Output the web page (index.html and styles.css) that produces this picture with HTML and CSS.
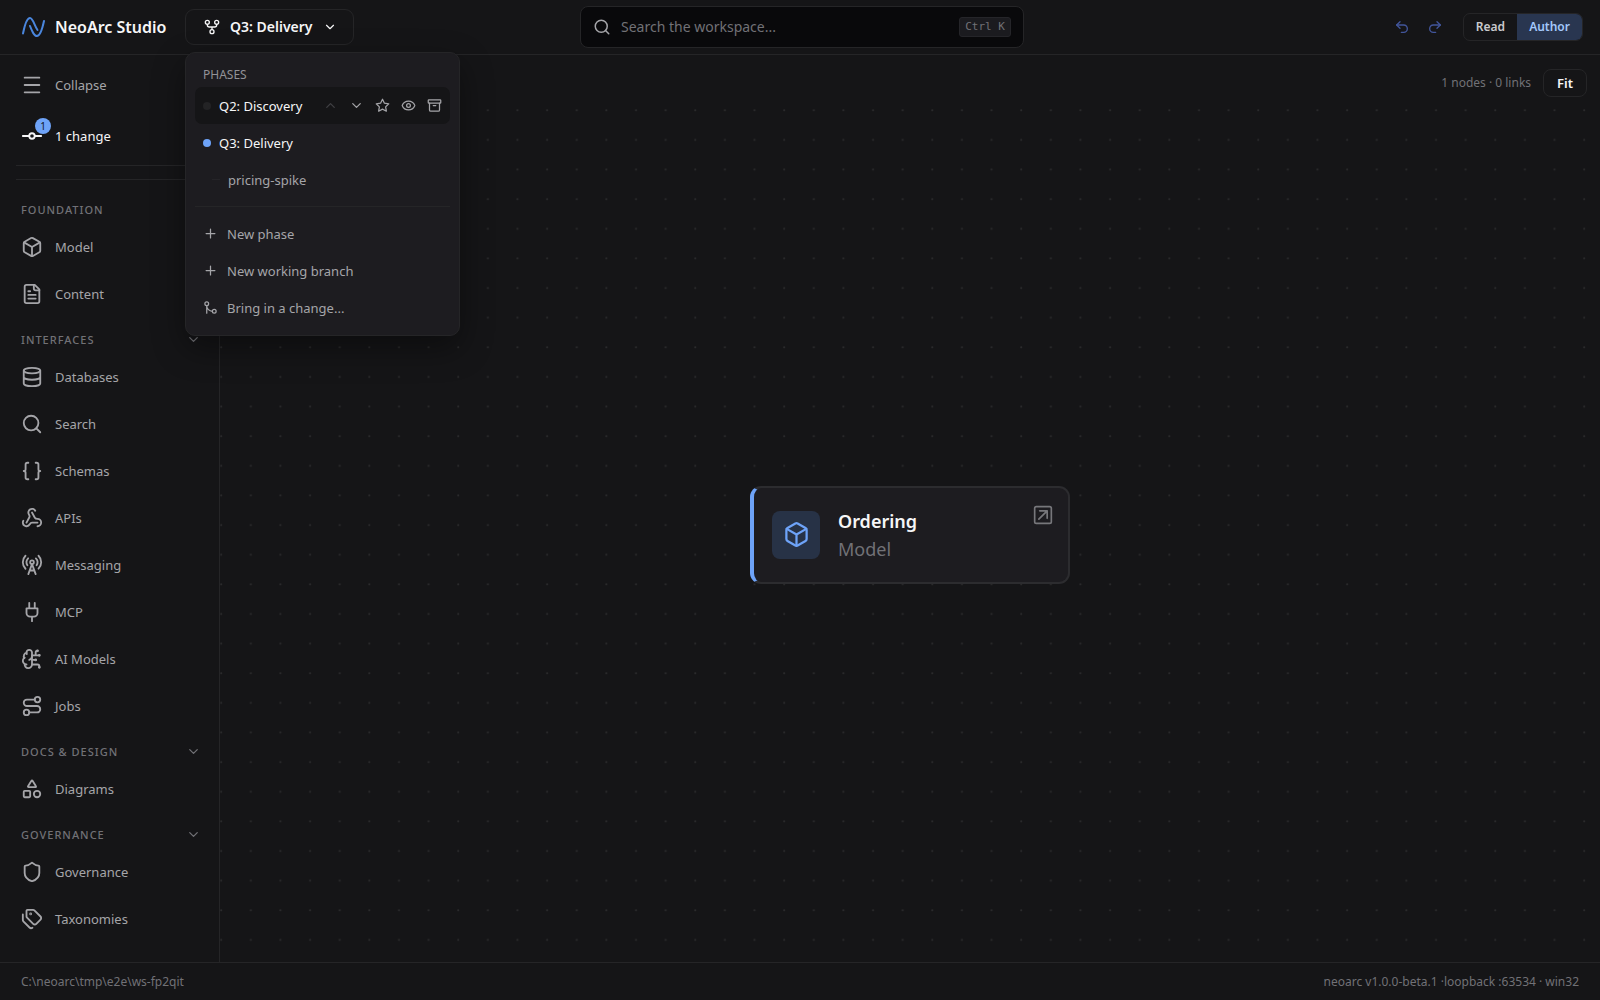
FILE: index.html
```html
<!DOCTYPE html>
<html lang="en">
<head>
<meta charset="utf-8">
<meta name="viewport" content="width=device-width, initial-scale=1">
<title>NeoArc Studio</title>
<link rel="stylesheet" href="styles.css">
</head>
<body>
<svg class="sprite" aria-hidden="true">
  <symbol id="i-box" viewBox="0 0 24 24"><path d="M21 8a2 2 0 0 0-1-1.73l-7-4a2 2 0 0 0-2 0l-7 4A2 2 0 0 0 3 8v8a2 2 0 0 0 1 1.73l7 4a2 2 0 0 0 2 0l7-4A2 2 0 0 0 21 16Z"/><path d="m3.3 7 8.7 5 8.7-5M12 22V12"/></symbol>
  <symbol id="i-down" viewBox="0 0 24 24"><path d="m6 9 6 6 6-6"/></symbol>
  <symbol id="i-up" viewBox="0 0 24 24"><path d="m18 15-6-6-6 6"/></symbol>
  <symbol id="i-plus" viewBox="0 0 24 24"><path d="M5 12h14M12 5v14"/></symbol>
  <symbol id="i-search" viewBox="0 0 24 24"><circle cx="11" cy="11" r="8"/><path d="m21 21-4.3-4.3"/></symbol>
</svg>

<header class="topbar">
  <div class="topbar-start">
    <a class="brand" href="#">
      <svg class="logo" viewBox="0 0 24 24" aria-hidden="true"><path d="M2 18.5C3.500 11 6 3 9 3s4.500 8 7.500 12"/><path d="M9 11c2 5 4 10 7 10s5.500-8 7-15"/></svg>
      <span>NeoArc Studio</span>
    </a>
    <div class="phase-picker">
      <button class="phase-button" type="button" aria-haspopup="menu" aria-expanded="true">
        <svg class="icon" viewBox="0 0 24 24" aria-hidden="true"><circle cx="12" cy="19" r="3"/><circle cx="5" cy="5" r="3"/><circle cx="19" cy="5" r="3"/><path d="M19 8v1c0 2-1 3-3 3H8c-2 0-3-1-3-3V8M12 12v4"/></svg>
        <span>Q3: Delivery</span>
        <svg class="icon icon-small" aria-hidden="true"><use href="#i-down"/></svg>
      </button>
      <div class="phase-menu">
        <h2 class="menu-title">PHASES</h2>
        <div class="phase-row is-hovered">
          <button class="phase-name" type="button"><span class="dot"></span>Q2: Discovery</button>
          <div class="phase-actions">
            <button type="button" aria-label="Move up" disabled><svg class="icon" aria-hidden="true"><use href="#i-up"/></svg></button>
            <button type="button" aria-label="Move down"><svg class="icon" aria-hidden="true"><use href="#i-down"/></svg></button>
            <button type="button" aria-label="Set as default"><svg class="icon" viewBox="0 0 24 24" aria-hidden="true"><path d="m12 2 3.100 6.300 6.900 1-5 4.900 1.200 6.900-6.200-3.300-6.200 3.300L7 14.200 2 9.300l6.900-1z"/></svg></button>
            <button type="button" aria-label="View"><svg class="icon" viewBox="0 0 24 24" aria-hidden="true"><path d="M2.060 12.350a1 1 0 0 1 0-.7 10.750 10.750 0 0 1 19.880 0 1 1 0 0 1 0 .7 10.750 10.750 0 0 1-19.880 0"/><circle cx="12" cy="12" r="3"/></svg></button>
            <button type="button" aria-label="Archive"><svg class="icon" viewBox="0 0 24 24" aria-hidden="true"><rect x="2" y="3" width="20" height="5" rx="1"/><path d="M4 8v11a2 2 0 0 0 2 2h12a2 2 0 0 0 2-2V8M10 12h4"/></svg></button>
          </div>
        </div>
        <div class="phase-row"><button class="phase-name" type="button"><span class="dot is-active"></span>Q3: Delivery</button></div>
        <div class="phase-row"><button class="phase-name is-branch" type="button"><span class="dash"></span>pricing-spike</button></div>
        <hr class="menu-rule">
        <button class="menu-action" type="button"><svg class="icon" aria-hidden="true"><use href="#i-plus"/></svg>New phase</button>
        <button class="menu-action" type="button"><svg class="icon" aria-hidden="true"><use href="#i-plus"/></svg>New working branch</button>
        <button class="menu-action" type="button"><svg class="icon" viewBox="0 0 24 24" aria-hidden="true"><circle cx="18" cy="18" r="3"/><circle cx="6" cy="6" r="3"/><path d="M6 21V9a9 9 0 0 0 9 9"/></svg>Bring in a change...</button>
      </div>
    </div>
  </div>
  <label class="search">
    <svg class="icon" aria-hidden="true"><use href="#i-search"/></svg>
    <input type="search" placeholder="Search the workspace..." aria-label="Search the workspace">
    <kbd>Ctrl K</kbd>
  </label>
  <div class="topbar-end">
    <button class="history" type="button" aria-label="Undo"><svg class="icon" viewBox="0 0 24 24" aria-hidden="true"><path d="M9 14 4 9l5-5"/><path d="M4 9h10.500a5.500 5.500 0 0 1 0 11H11"/></svg></button>
    <button class="history" type="button" aria-label="Redo"><svg class="icon" viewBox="0 0 24 24" aria-hidden="true"><path d="m15 14 5-5-5-5"/><path d="M20 9H9.500a5.500 5.500 0 0 0 0 11H13"/></svg></button>
    <div class="mode" role="group" aria-label="Mode">
      <button type="button">Read</button>
      <button type="button" class="is-selected" aria-pressed="true">Author</button>
    </div>
  </div>
</header>

<div class="workspace">
  <aside class="sidebar">
    <div class="sidebar-top">
      <button class="nav-item" type="button"><svg class="icon" viewBox="0 0 24 24" aria-hidden="true"><path d="M4 4h16M4 12h16M4 20h16"/></svg>Collapse</button>
      <button class="nav-item changes" type="button">
        <span class="changes-icon"><svg class="icon" viewBox="0 0 24 24" aria-hidden="true"><circle cx="12" cy="12" r="3"/><path d="M2 12h7M15 12h7"/></svg><span class="badge">1</span></span>1 change
      </button>
    </div>
    <hr class="side-rule">
    <hr class="side-rule second">
    <nav>
      <section class="group">
        <h2>FOUNDATION</h2>
        <a class="nav-item" href="#"><svg class="icon" aria-hidden="true"><use href="#i-box"/></svg>Model</a>
        <a class="nav-item" href="#"><svg class="icon" viewBox="0 0 24 24" aria-hidden="true"><path d="M15 2H6a2 2 0 0 0-2 2v16a2 2 0 0 0 2 2h12a2 2 0 0 0 2-2V7Z"/><path d="M14 2v4a2 2 0 0 0 2 2h4M10 9H8M16 13H8M16 17H8"/></svg>Content</a>
      </section>
      <section class="group">
        <h2>INTERFACES<svg class="icon" aria-hidden="true"><use href="#i-down"/></svg></h2>
        <a class="nav-item" href="#"><svg class="icon" viewBox="0 0 24 24" aria-hidden="true"><ellipse cx="12" cy="5" rx="9" ry="3"/><path d="M3 5v14a9 3 0 0 0 18 0V5M3 12a9 3 0 0 0 18 0"/></svg>Databases</a>
        <a class="nav-item" href="#"><svg class="icon" aria-hidden="true"><use href="#i-search"/></svg>Search</a>
        <a class="nav-item" href="#"><svg class="icon" viewBox="0 0 24 24" aria-hidden="true"><path d="M8 3H7a2 2 0 0 0-2 2v5a2 2 0 0 1-2 2 2 2 0 0 1 2 2v5a2 2 0 0 0 2 2h1M16 21h1a2 2 0 0 0 2-2v-5a2 2 0 0 1 2-2 2 2 0 0 1-2-2V5a2 2 0 0 0-2-2h-1"/></svg>Schemas</a>
        <a class="nav-item" href="#"><svg class="icon" viewBox="0 0 24 24" aria-hidden="true"><path d="M18 16.980h-5.990c-1.100 0-1.950.94-2.480 1.900A4 4 0 0 1 2 17c.01-.7.200-1.400.57-2"/><path d="m6 17 3.130-5.780c.53-.97.1-2.180-.5-3.100a4 4 0 1 1 6.890-4.060"/><path d="m12 6 3.130 5.730C15.660 12.700 16.900 13 18 13a4 4 0 0 1 0 8"/></svg>APIs</a>
        <a class="nav-item" href="#"><svg class="icon" viewBox="0 0 24 24" aria-hidden="true"><path d="M4.900 16.100C1 12.200 1 5.800 4.900 1.900M7.800 4.700a6.140 6.140 0 0 0-.8 7.500M16.200 4.800c2 2 2.260 5.110.8 7.470M19.100 1.900a9.960 9.960 0 0 1 0 14.100M9.500 18h5M8 22l4-11 4 11"/><circle cx="12" cy="9" r="2"/></svg>Messaging</a>
        <a class="nav-item" href="#"><svg class="icon" viewBox="0 0 24 24" aria-hidden="true"><path d="M12 22v-5M9 8V2M15 8V2M18 8v5a4 4 0 0 1-4 4h-4a4 4 0 0 1-4-4V8Z"/></svg>MCP</a>
        <a class="nav-item" href="#"><svg class="icon" viewBox="0 0 24 24" aria-hidden="true"><path d="M12 5a3 3 0 1 0-5.997.125 4 4 0 0 0-2.526 5.770 4 4 0 0 0 .556 6.588A4 4 0 1 0 12 18Z"/><path d="M9 13a4.500 4.500 0 0 0 3-4M6 5.125A3 3 0 0 0 6.400 6.500M3.477 10.896a4 4 0 0 1 .585-.396M6 18a4 4 0 0 1-1.967-.516M12 13h4M12 18h6a2 2 0 0 1 2 2v1M12 8h8M16 8V5a2 2 0 0 1 2-2"/><circle cx="16" cy="13" r=".5"/><circle cx="18" cy="3" r=".5"/><circle cx="20" cy="21" r=".5"/><circle cx="20" cy="8" r=".5"/></svg>AI Models</a>
        <a class="nav-item" href="#"><svg class="icon" viewBox="0 0 24 24" aria-hidden="true"><circle cx="6" cy="19" r="3"/><circle cx="18" cy="5" r="3"/><path d="M9 19h8.500a3.500 3.500 0 0 0 0-7h-11a3.500 3.500 0 0 1 0-7H15"/></svg>Jobs</a>
      </section>
      <section class="group">
        <h2>DOCS &amp; DESIGN<svg class="icon" aria-hidden="true"><use href="#i-down"/></svg></h2>
        <a class="nav-item" href="#"><svg class="icon" viewBox="0 0 24 24" aria-hidden="true"><path d="M8.300 10a.7.7 0 0 1-.626-1.079L11.400 3a.7.7 0 0 1 1.198-.043L16.300 8.900a.7.7 0 0 1-.572 1.100Z"/><rect x="3" y="14" width="7" height="7" rx="1"/><circle cx="17.500" cy="17.500" r="3.500"/></svg>Diagrams</a>
      </section>
      <section class="group">
        <h2>GOVERNANCE<svg class="icon" aria-hidden="true"><use href="#i-down"/></svg></h2>
        <a class="nav-item" href="#"><svg class="icon" viewBox="0 0 24 24" aria-hidden="true"><path d="M20 13c0 5-3.500 7.500-7.660 8.950a1 1 0 0 1-.67-.01C7.500 20.500 4 18 4 13V6a1 1 0 0 1 1-1c2 0 4.500-1.200 6.240-2.720a1.170 1.170 0 0 1 1.520 0C14.510 3.810 17 5 19 5a1 1 0 0 1 1 1z"/></svg>Governance</a>
        <a class="nav-item" href="#"><svg class="icon" viewBox="0 0 24 24" aria-hidden="true"><path d="M13.172 2a2 2 0 0 1 1.414.586l6.710 6.710a2.400 2.400 0 0 1 0 3.408l-4.592 4.592a2.400 2.400 0 0 1-3.408 0l-6.710-6.710A2 2 0 0 1 6 9.172V3a1 1 0 0 1 1-1z"/><path d="M2 7v6.172a2 2 0 0 0 .586 1.414l6.710 6.710a2.400 2.400 0 0 0 3.191.193"/><circle cx="10.500" cy="6.500" r=".5"/></svg>Taxonomies</a>
      </section>
    </nav>
  </aside>
  <main class="main">
    <div class="toolbar"><span>1 nodes · 0 links</span><button class="fit" type="button">Fit</button></div>
    <div class="canvas">
      <svg class="grid" aria-hidden="true">
        <pattern id="dots" width="29.63" height="29.63" patternUnits="userSpaceOnUse"><circle cx="1.2" cy="1.2" r="1"/></pattern>
        <rect width="100%" height="100%" fill="url(#dots)"/>
      </svg>
      <article class="node">
        <span class="node-icon"><svg class="icon" aria-hidden="true"><use href="#i-box"/></svg></span>
        <div class="node-text"><h3>Ordering</h3><p>Model</p></div>
        <button class="node-open" type="button" aria-label="Open Ordering"><svg class="icon" viewBox="0 0 24 24" aria-hidden="true"><rect x="2" y="2" width="20" height="20" rx="2"/><path d="M8 7h9v9M7 17 17 7"/></svg></button>
      </article>
    </div>
  </main>
</div>

<footer class="statusbar"><span>C:\neoarc\tmp\e2e\ws-fp2qit</span><span>neoarc v1.0.0-beta.1 ·loopback :63534 · win32</span></footer>
</body>
</html>
```
FILE: styles.css
```css
* { box-sizing: border-box; }

:root {
  --bg: #151517;
  --panel: #1d1c20;
  --line: #252527;
  --text: #f6f6f7;
  --soft: #a5a5a9;
  --muted: #717176;
  --accent: #6ea3f8;
}

body {
  margin: 0;
  min-height: 100vh;
  display: flex;
  flex-direction: column;
  background: var(--bg);
  color: var(--text);
  font: 13px/20px "Noto Sans", "Open Sans", sans-serif;
}

h2, h3, p { margin: 0; font: inherit; }
button { margin: 0; padding: 0; border: 0; background: none; color: inherit; font: inherit; cursor: pointer; }
a { color: inherit; text-decoration: none; }
hr { margin: 0; border: 0; border-top: 1px solid var(--line); }

.sprite { position: absolute; width: 0; height: 0; }

.icon {
  flex: none;
  width: 16px;
  height: 16px;
  fill: none;
  stroke: currentColor;
  stroke-width: 2;
  stroke-linecap: round;
  stroke-linejoin: round;
}

/* Top bar */
.topbar {
  display: grid;
  grid-template-columns: 1fr 444px 1fr;
  align-items: center;
  height: 55px;
  padding: 0 17px 0 21px;
  border-bottom: 1px solid var(--line);
}

.topbar-start, .topbar-end { display: flex; align-items: center; }
.topbar-end { justify-content: flex-end; }

.brand { display: flex; align-items: center; gap: 10px; width: 164px; font-size: 16px; font-weight: 600; white-space: nowrap; }
.logo { flex: none; width: 24px; height: 24px; fill: none; stroke: #4a86dd; stroke-width: 2; stroke-linecap: round; }

.phase-picker { position: relative; }
.phase-button {
  display: flex;
  align-items: center;
  gap: 10px;
  height: 36px;
  padding: 0 16px 0 18px;
  border: 1px solid var(--line);
  border-radius: 9px;
  font-size: 14px;
  font-weight: 600;
}
.icon-small { width: 14px; height: 14px; }

.phase-menu {
  position: absolute;
  z-index: 2;
  top: 43px;
  left: 0;
  width: 275px;
  padding: 9px;
  border: 1px solid var(--line);
  border-radius: 10px;
  background: var(--panel);
  box-shadow: 0 12px 32px rgba(0, 0, 0, 0.4);
}
.menu-title { padding: 3px 8px 2px; font-size: 12px; letter-spacing: 0; color: #929297; }
.phase-row { display: flex; align-items: center; height: 37px; padding: 0 8px; border-radius: 7px; }
.phase-row.is-hovered { background: #151517; }
.phase-name { display: flex; flex: 1; align-items: center; gap: 8px; text-align: left; white-space: nowrap; }
.dot { width: 8px; height: 8px; border-radius: 50%; background: #232325; }
.dot.is-active { background: var(--accent); }
.phase-name.is-branch { padding-left: 9px; color: var(--soft); }
.dash { width: 8px; height: 1px; background: #252428; }
.phase-actions { display: flex; gap: 11px; color: var(--soft); }
.phase-actions button { display: flex; }
.phase-actions button:disabled { color: #404044; }
.phase-actions .icon { width: 15px; height: 15px; }
.menu-rule { margin: 8px 0; }
.menu-action { display: flex; align-items: center; gap: 9px; width: 100%; height: 37px; padding: 0 8px; color: var(--soft); }
.menu-action .icon { width: 15px; height: 15px; }

.search {
  display: flex;
  align-items: center;
  gap: 10px;
  height: 42px;
  padding: 0 12px;
  border: 1px solid var(--line);
  border-radius: 8px;
  background: #09090b;
  color: var(--soft);
}
.search .icon { width: 18px; height: 18px; }
.search input { flex: 1; min-width: 0; padding: 0; border: 0; outline: 0; background: none; color: var(--text); font: inherit; font-size: 14px; }
.search input::placeholder { color: var(--muted); opacity: 1; }
.search kbd {
  padding: 0 5px;
  border: 1px solid #252529;
  border-radius: 3px;
  background: #1b1b1f;
  color: var(--muted);
  font: 11px/18px "DejaVu Sans Mono", monospace;
}

.history { display: flex; width: 33px; justify-content: center; color: #42569c; }
.history .icon { width: 16px; height: 16px; }
.mode { display: flex; margin-left: 11px; overflow: hidden; border: 1px solid var(--line); border-radius: 7px; }
.mode button { height: 26px; padding: 0 12px; color: #c9c9cc; font-size: 12px; font-weight: 600; }
.mode .is-selected { background: #293650; color: #a3c8fb; }

/* Sidebar */
.workspace { display: flex; flex: 1; }
.sidebar { width: 220px; border-right: 1px solid var(--line); }
.sidebar-top { padding: 6px 0 2px; }
.nav-item { display: flex; align-items: center; gap: 12px; width: 100%; height: 47px; padding-left: 21px; color: var(--soft); }
.nav-item .icon { width: 22px; height: 22px; }
.changes { height: 55px; color: var(--text); }
.changes-icon { position: relative; display: flex; }
.badge {
  position: absolute;
  top: -7px;
  right: -8px;
  width: 16px;
  height: 16px;
  border-radius: 50%;
  background: var(--accent);
  color: #10131a;
  font-size: 10px;
  line-height: 16px;
  text-align: center;
}
.side-rule { margin: 0 16px; }
.second { margin: 13px 16px 16px; }
.group { margin-bottom: 9px; }
.group h2 { display: flex; justify-content: space-between; align-items: center; height: 27px; padding: 0 18px 0 21px; color: var(--muted); font-size: 11px; font-weight: 500; letter-spacing: 1px; }
.group h2 .icon { width: 15px; height: 15px; }

/* Canvas */
.main { display: flex; flex: 1; flex-direction: column; }
.toolbar { display: flex; align-items: center; justify-content: flex-end; gap: 12px; height: 54px; padding: 2px 13px 0; color: var(--muted); font-size: 12px; }
.fit { height: 28px; padding: 0 13px; border: 1px solid var(--line); border-radius: 8px; color: var(--text); font-size: 13px; font-weight: 600; }
.canvas { position: relative; display: flex; flex: 1; align-items: center; justify-content: center; padding-bottom: 2px; }
.grid { position: absolute; inset: 0; width: 100%; height: 100%; fill: #2b2b2d; }

.node {
  position: relative;
  display: flex;
  align-items: center;
  gap: 18px;
  width: 320px;
  height: 98px;
  padding: 0 15px 0 18px;
  border: 2px solid #2c2c2f;
  border-left: 4px solid var(--accent);
  border-radius: 11px;
  background: var(--panel);
}
.node-icon { display: flex; align-items: center; justify-content: center; width: 48px; height: 48px; border-radius: 8px; background: #273246; color: var(--accent); }
.node-icon .icon { width: 27px; height: 27px; }
.node-text { flex: 1; font-size: 18px; line-height: 28px; }
.node-text h3 { font-weight: 600; }
.node-text p { color: var(--muted); }
.node-open { align-self: flex-start; margin-top: 17px; color: #77777b; }
.node-open .icon { display: block; width: 20px; height: 20px; }

.statusbar { display: flex; justify-content: space-between; align-items: center; height: 38px; padding: 0 21px; border-top: 1px solid var(--line); color: var(--muted); font-size: 12px; }
```
